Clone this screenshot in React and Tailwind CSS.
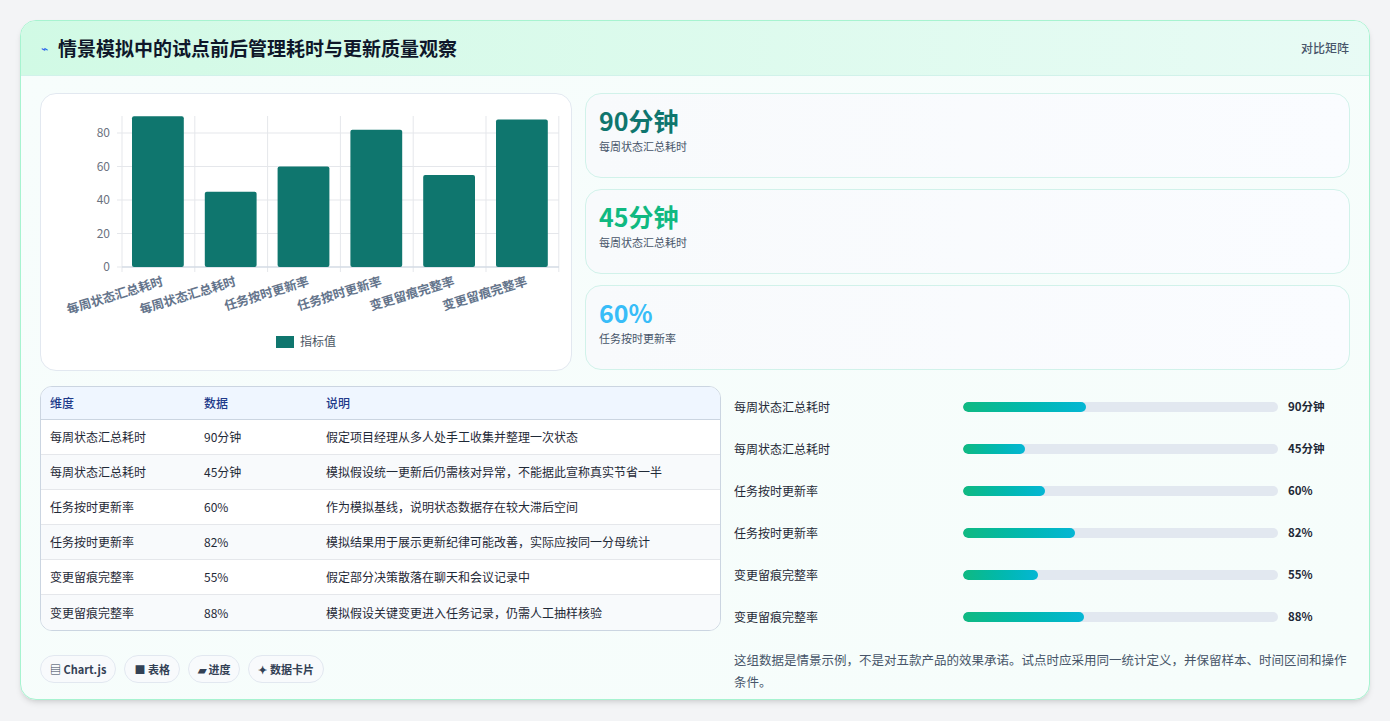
import React from "react";

const vals = [90, 45, 60, 82, 55, 88];
const labels = ["每周状态汇总耗时","每周状态汇总耗时","任务按时更新率","任务按时更新率","变更留痕完整率","变更留痕完整率"];
const units = ["90分钟","45分钟","60%","82%","55%","88%"];
const notes = ["假定项目经理从多人处手工收集并整理一次状态","模拟假设统一更新后仍需核对异常，不能据此宣称真实节省一半","作为模拟基线，说明状态数据存在较大滞后空间","模拟结果用于展示更新纪律可能改善，实际应按同一分母统计","假定部分决策散落在聊天和会议记录中","模拟假设关键变更进入任务记录，仍需人工抽样核验"];

function Chart() {
  const x0 = 81, y0 = 173, k = 1.675, cw = 72.8;
  return (
    <svg width="530" height="276" className="block">
      {[0,20,40,60,80].map(v => (
        <g key={v}>
          <line x1={x0-5} x2={518} y1={y0-v*k} y2={y0-v*k} stroke="#e5e7eb" />
          <text x={x0-12} y={y0-v*k+4} textAnchor="end" fontSize="12" fill="#6b7280">{v}</text>
        </g>
      ))}
      {[0,1,2,3,4,5,6].map(i => (
        <line key={i} x1={x0+i*cw} x2={x0+i*cw} y1={22} y2={y0+5} stroke="#e5e7eb" />
      ))}
      <line x1={x0} x2={518} y1={y0} y2={y0} stroke="#cbd5e1" />
      {vals.map((v,i) => (
        <rect key={i} x={x0+i*cw+10} y={y0-v*k} width={cw-21} height={v*k} rx="2" fill="#0f766e" />
      ))}
      {labels.map((l,i) => (
        <text key={i} transform={`translate(${x0+i*cw+42},${y0+18}) rotate(-17)`} textAnchor="end" fontSize="12.5" fontWeight="600" fill="#64748b">{l}</text>
      ))}
      <rect x="235" y="242" width="18" height="12" fill="#0f766e" />
      <text x="259" y="252" fontSize="12" fill="#4b5563">指标值</text>
    </svg>
  );
}

export default function App() {
  const f = { fontFamily: '"Noto Sans CJK SC","Noto Sans",sans-serif' };
  return (
    <div style={f} className="w-[1390px] h-[721px] bg-[#f3f4f6] pt-[20px] pl-[20px]">
      <div className="w-[1350px] h-[680px] rounded-2xl border border-[#a7f3d0] bg-gradient-to-br from-[#f7fdfc] to-[#f6fdfb] overflow-hidden shadow-md">
        <div className="h-[55px] bg-gradient-to-r from-[#d1fae5] to-[#e8fbf5] border-b border-[#d1f2ea] flex items-center justify-between px-[20px]">
          <div className="flex items-center gap-[10px]">
            <span className="text-[#2563eb] text-[12px]">⌁</span>
            <span className="text-[19px] font-bold text-[#0f172a]">情景模拟中的试点前后管理耗时与更新质量观察</span>
          </div>
          <span className="text-[12px] text-[#475569] font-medium">对比矩阵</span>
        </div>
        <div className="px-[19px] pt-[17px]">
          <div className="flex gap-[13px]">
            <div className="w-[532px] h-[278px] bg-white rounded-2xl border border-[#e2e8f0]"><Chart /></div>
            <div className="flex-1 flex flex-col gap-[11px]">
              {[["90分钟","每周状态汇总耗时","text-[#0f766e]"],["45分钟","每周状态汇总耗时","text-[#10b981]"],["60%","任务按时更新率","text-[#38bdf8]"]].map(([v,l,c],i)=>(
                <div key={i} className="h-[85px] rounded-2xl border border-[#d1f2ea] bg-gradient-to-r from-[#f8fafc] to-[#fafcff] px-[13px] pt-[10px]">
                  <div className={`text-[25px] font-bold leading-[32px] ${c}`}>{v}</div>
                  <div className="text-[11px] text-[#475569] mt-[2px]">{l}</div>
                </div>
              ))}
            </div>
          </div>
          <div className="flex gap-[13px] mt-[15px]">
            <div className="w-[681px]">
              <div className="rounded-xl border border-[#cbd5e1] overflow-hidden bg-white text-[12px]">
                <div className="flex h-[33px] items-center bg-[#eff6ff] border-b border-[#cbd5e1] text-[#1e3a8a] font-medium">
                  <div className="w-[163px] pl-[9px]">维度</div><div className="w-[122px]">数据</div><div>说明</div>
                </div>
                {labels.map((l,i)=>(
                  <div key={i} className={`flex h-[35px] items-center text-[#1f2937] ${i<5?"border-b border-[#e5e7eb]":""} ${i%2?"bg-[#f8fafc]":"bg-white"}`}>
                    <div className="w-[163px] pl-[9px]">{l}</div><div className="w-[122px]">{units[i]}</div><div>{notes[i]}</div>
                  </div>
                ))}
              </div>
              <div className="flex gap-[8px] mt-[24px] text-[11px] font-semibold text-[#334155]">
                {["▤ Chart.js","■ 表格","▰ 进度","✦ 数据卡片"].map(t=>(
                  <span key={t} className="h-[28px] px-[9px] flex items-center rounded-full border border-[#e2e8f0] bg-[#f8fafc]">{t}</span>
                ))}
              </div>
            </div>
            <div className="flex-1 pl-[0px]">
              {labels.map((l,i)=>(
                <div key={i} className="h-[42px] flex items-center text-[12px] text-[#1f2937]">
                  <div className="w-[229px]">{l}</div>
                  <div className="w-[315px] h-[10px] rounded-full bg-[#e2e8f0] overflow-hidden">
                    <div className="h-full rounded-full bg-gradient-to-r from-[#10b981] to-[#06b6d4]" style={{width: `${vals[i]/2.3}%`}} />
                  </div>
                  <div className="ml-[10px] font-bold text-[11.5px]">{units[i]}</div>
                </div>
              ))}
              <div className="mt-[11px] text-[12.5px] leading-[22px] text-[#475569]">这组数据是情景示例，不是对五款产品的效果承诺。试点时应采用同一统计定义，并保留样本、时间区间和操作条件。</div>
            </div>
          </div>
        </div>
      </div>
    </div>
  );
}
